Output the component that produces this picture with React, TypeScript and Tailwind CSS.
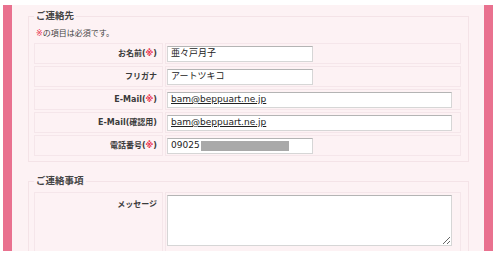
import React from 'react';

const font = { fontFamily: '"DejaVu Sans", "Noto Sans CJK JP", sans-serif' };

const Req = () => <span className="text-[#e8334f]">※</span>;

interface RowProps {
  label: React.ReactNode;
  children: React.ReactNode;
}

const Row: React.FC<RowProps> = ({ label, children }) => (
  <div className="flex gap-[2px] h-[21px]">
    <div className="w-[129px] border border-[#f5e6ea] flex items-center justify-end pr-[5px] text-[8px] font-bold text-[#3a3a3a] whitespace-nowrap">
      {label}
    </div>
    <div className="flex-1 border border-[#f5e6ea] flex items-center pl-[1px]">{children}</div>
  </div>
);

const inputCls =
  'h-[16px] bg-white border border-[#d6d6d6] border-t-[#b4b4b4] pl-[3px] text-[9px] text-[#222] flex items-center whitespace-nowrap overflow-hidden';

export default function App() {
  return (
    <div className="w-[500px] h-[255px] bg-white overflow-hidden" style={font}>
      <div className="ml-[3px] mt-[5px] w-[490px] h-[246px] border-x-[9px] border-[#e9718f] bg-[#fdf2f4] overflow-hidden pl-[16px] pr-[15px]">
        {/* ご連絡先 */}
        <fieldset className="mt-[5px] border border-[#f4e3e7] pl-[5px] pr-[7px] pb-[5px]">
          <legend className="px-[2px] text-[9.5px] leading-[12px] font-bold text-[#444]">ご連絡先</legend>
          <p className="mt-[6px] pl-[2px] text-[8px] leading-[12px] text-[#444]">
            <Req />の項目は必須です。
          </p>
          <div className="mt-[3px] flex flex-col gap-[2px]">
            <Row label={<>お名前(<Req />)</>}>
              <div className={`${inputCls} w-[146px]`}>亜々戸月子</div>
            </Row>
            <Row label="フリガナ">
              <div className={`${inputCls} w-[146px]`}>アートツキコ</div>
            </Row>
            <Row label={<>E-Mail(<Req />)</>}>
              <div className={`${inputCls} w-[285px] h-[15px] text-[#3a3a98] underline`}>bam@beppuart.ne.jp</div>
            </Row>
            <Row label="E-Mail(確認用)">
              <div className={`${inputCls} w-[285px] h-[15px] text-[#3a3a98] underline`}>bam@beppuart.ne.jp</div>
            </Row>
            <Row label={<>電話番号(<Req />)</>}>
              <div className={`${inputCls} w-[146px]`}>
                <span>09025</span>
                <span className="ml-[1px] w-[88px] h-[10px] bg-[#a9a9a9]" />
              </div>
            </Row>
          </div>
        </fieldset>

        {/* ご連絡事項 */}
        <fieldset className="mt-[13px] border border-[#f4e3e7] pl-[5px] pr-[7px] pb-[5px]">
          <legend className="px-[2px] text-[9.5px] leading-[12px] font-bold text-[#444]">ご連絡事項</legend>
          <div className="mt-[5px] flex gap-[2px] h-[60px]">
            <div className="w-[129px] border border-[#f5e6ea] flex justify-end pr-[5px] pt-[6px] text-[8px] leading-[12px] font-bold text-[#3a3a3a]">
              メッセージ
            </div>
            <div className="flex-1 border border-[#f5e6ea] pl-[1px] pt-[2px]">
              <textarea className="block w-[285px] h-[51px] bg-white border border-[#d6d6d6] border-t-[#b4b4b4] text-[9px]" />
            </div>
          </div>
        </fieldset>
      </div>
    </div>
  );
}
